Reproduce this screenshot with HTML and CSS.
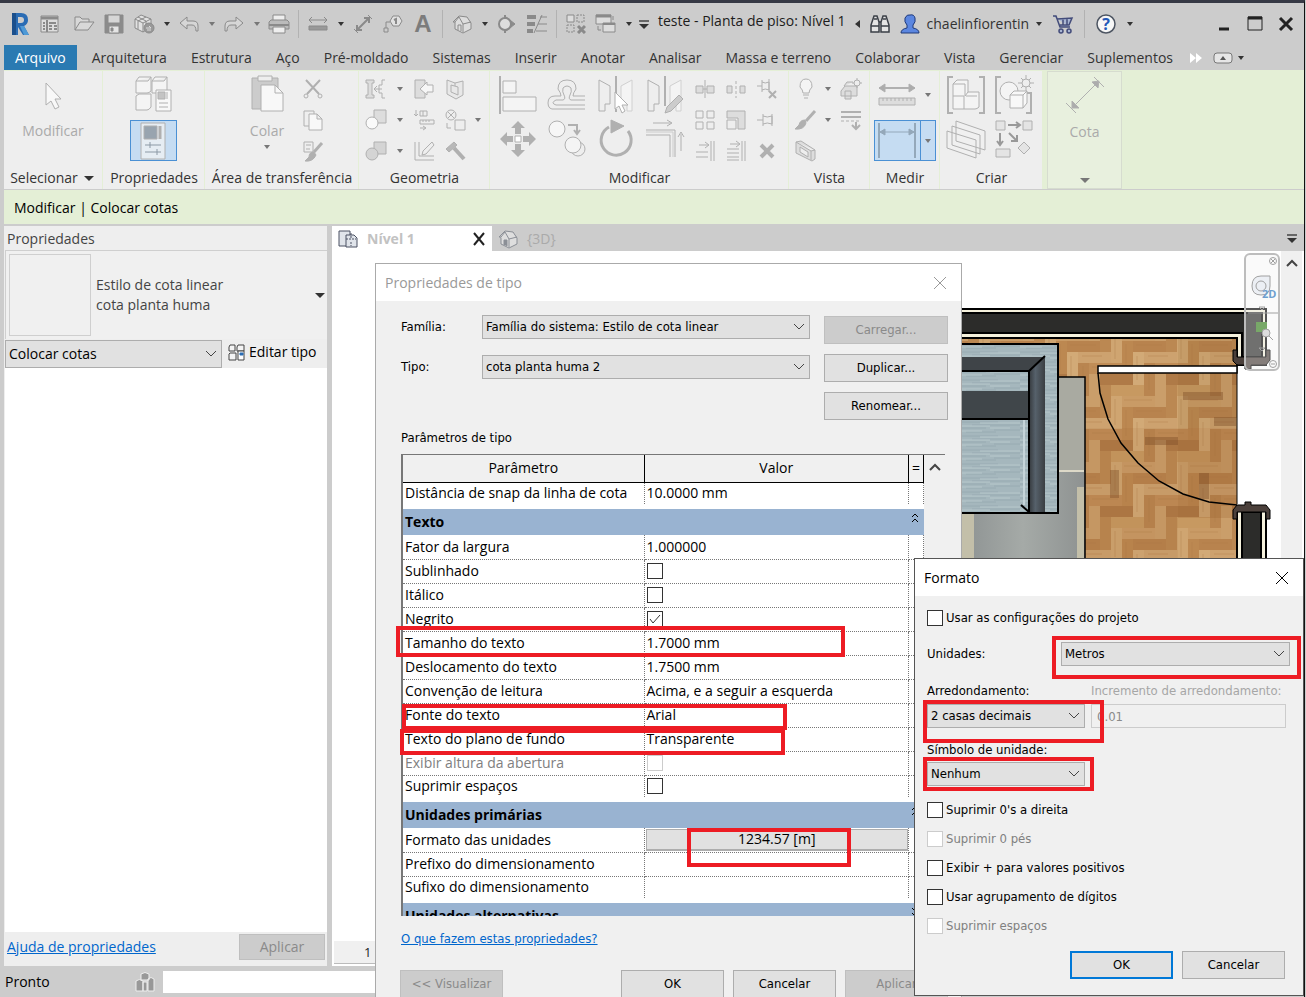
FILE: index.html
```html
<!DOCTYPE html>
<html lang="pt-BR">
<head>
  <meta charset="UTF-8">
  <meta name="viewport" content="width=device-width, initial-scale=1.0">
  <title>teste - Planta de piso: Nível 1</title>
  <link rel="stylesheet" href="styles.css">
</head>
<body>
  <div class="app">
    <!-- quick access toolbar -->
    <header class="quick">
      <button class="qb" aria-label="Revit"><svg width="20" height="24" viewBox="0 0 20 24"><path d="M2 1h9q7 0 7 7 0 4-4 6l5 9h-6l-5-8v8H2z" fill="#2a6cb4"/><path d="M2 1h4v22H2z" fill="#1b4f8c"/><path d="M8 5h3q3 0 3 3t-3 3H8z" fill="#cccccc"/><path d="M10 14l4 0 5 9h-5z" fill="#4f9ad6"/></svg></button>
      <button class="qb" aria-label="Página inicial"><svg class="tool" width="20" height="20" viewBox="0 0 20 20"><path d="M1 2h17v16H1z" fill="#ddd"/><path d="M1 4h17" stroke-width="3"/><path d="M7 6v12M3 9h2M3 12h2M3 15h2M9 9h7M9 12h3M9 15h3M14 12h3M14 15h3" stroke-width="2"/></svg></button>
      <button class="qb wide" aria-label="Abrir"><svg class="tool" width="22" height="20" viewBox="0 0 22 20"><path d="M2 16V3h5l2 2h7v3M2 16l5-8h14l-6 8z" fill="#d8d8d8"/></svg></button>
      <button class="qb" aria-label="Salvar"><svg class="tool" width="20" height="20" viewBox="0 0 20 20"><path d="M1 1h18v18H1z" fill="#8b8b8b"/><path d="M4 1h12v8H4z" fill="#d6d6d6"/><path d="M5 12h10v7H5z" fill="#e4e4e4"/><path d="M7 14h2v3H7z" fill="#888"/></svg></button>
      <button class="qb" aria-label="Sincronizar"><svg class="tool" width="22" height="22" viewBox="0 0 22 22"><path d="M2 6l6-4 5 2 5 2v8l-8 5-8-4z" fill="#e2e2e2"/><path d="M2 6l8 4 8-4M10 10v9M5 4l8 4v9M13 4L5 8v8"/><circle cx="16" cy="15" r="5" fill="#999"/><path d="M13 15h5l-2-2M18 17h-4" stroke="#ddd"/></svg></button>
      <span class="caret"></span>
      <button class="qb" aria-label="Desfazer"><svg class="tool" width="22" height="20" viewBox="0 0 22 20"><path d="M9 3L2 9l7 6v-4h5q4 0 4 6h2V12q0-5-5-5H9z" fill="#d6d6d6"/></svg></button>
      <span class="caret soft"></span>
      <button class="qb" aria-label="Refazer"><svg class="tool" width="22" height="20" viewBox="0 0 22 20"><path d="M13 3l7 6-7 6v-4H8q-4 0-4 6H2V12q0-5 5-5h6z" fill="#d6d6d6"/></svg></button>
      <span class="caret soft"></span>
      <button class="qb" aria-label="Imprimir"><svg class="tool" width="22" height="20" viewBox="0 0 22 20"><path d="M5 7V1h12v6" fill="#eee"/><path d="M1 8l2-2h16l2 2v7H1z" fill="#bbb"/><path d="M1 11h20" stroke-width="2"/><path d="M5 13h12v6H5z" fill="#eee"/></svg></button>
      <span class="sep"></span>
      <button class="qb" aria-label="Medir"><svg class="tool" width="20" height="16" viewBox="0 0 20 16"><path d="M1 4h18M4 1L1 4l3 3M16 1l3 3-3 3"/><path d="M1 10h18v4H1z" fill="#999"/></svg></button>
      <span class="caret"></span>
      <button class="qb" aria-label="Cota"><svg class="tool" width="20" height="20" viewBox="0 0 20 20"><path d="M4 16L16 4M11 4h5v5M4 11v5h5" stroke-width="2"/><path d="M15 1l4 4M1 15l4 4"/></svg></button>
      <button class="qb" aria-label="Identificador"><svg class="tool" width="20" height="20" viewBox="0 0 20 20"><path d="M10 2h6l3 5-3 5h-6L7 7z" fill="#e2e2e2"/><path d="M7 8H3v6M1 14h4v4H1z"/><path d="M11 6l2-1v5" stroke-width="2"/></svg></button>
      <button class="qb letter" aria-label="Texto">A</button>
      <span class="sep"></span>
      <button class="qb" aria-label="Vista 3D"><svg class="tool" width="20" height="20" viewBox="0 0 20 20"><path d="M1 8l6-6 8 1 4 6v6l-8 4-8-4V8z" fill="#ddd"/><path d="M3 8l4-5 4 7v8M11 10l8-2M6 16v-5h3v6" /></svg></button>
      <span class="caret"></span>
      <button class="qb" aria-label="Corte"><svg class="tool" width="20" height="20" viewBox="0 0 20 20"><path d="M9 3l9 7-9 7z" fill="#8b8b8b"/><circle cx="8" cy="10" r="6" fill="#ddd" stroke-width="2"/><path d="M8 1v3M8 16v3" stroke-width="2"/></svg></button>
      <button class="qb" aria-label="Linhas finas"><svg class="tool" width="22" height="20" viewBox="0 0 22 20"><path d="M1 3h9M1 10h8M1 17h6" stroke-width="4"/><path d="M8 19L16 1M14 3h7M12 10h9M10 17h11"/></svg></button>
      <span class="sep"></span>
      <button class="qb" aria-label="Fechar janelas ocultas"><svg class="tool" width="20" height="20" viewBox="0 0 20 20"><path d="M1 1h7v7H1z" fill="#ddd"/><path d="M11 1h7v7h-7zM1 11h7v7H1z" stroke-dasharray="2 1"/><path d="M12 12l7 7M19 12l-7 7" stroke-width="3"/></svg></button>
      <button class="qb" aria-label="Alternar janelas"><svg class="tool" width="22" height="20" viewBox="0 0 22 20"><path d="M1 1h15v9H1z" fill="#ddd"/><path d="M1 2h15" stroke-width="3"/><path d="M8 9h12v9H8z" fill="#ddd"/><path d="M8 10h12" stroke-width="2"/><path d="M18 2v4M3 12v4h3"/></svg></button>
      <span class="caret"></span>
      <span class="caret lined"></span>
      <h1 class="title">teste - Planta de piso: Nível 1</h1>
      <span class="caret side"></span>
      <button class="qb" aria-label="Pesquisar"><svg width="20" height="20" viewBox="0 0 20 20" fill="#e4e4e4" stroke="#3a3f47" stroke-width="1.500"><path d="M1 18v-7l3-9h3l2 6v10zM11 18V8l2-6h3l3 9v7z"/><path d="M1 12h8M11 12h8M9 8h2M4 5h3M13 5h3"/></svg></button>
      <button class="qb" aria-label="Conta"><svg width="20" height="20" viewBox="0 0 20 20" fill="#5b86e0" stroke="#203a78"><path d="M1 19q0-4 6-5V11Q4 8 5 4q2-4 5-3 4-1 5 3 1 4-2 7v3q6 1 6 5z"/></svg></button>
      <span class="user">chaelinfiorentin</span>
      <span class="caret"></span>
      <button class="qb cart" aria-label="Loja"><svg width="22" height="20" viewBox="0 0 22 20" fill="#a9b6d3" stroke="#434c7a" stroke-width="1.500"><path d="M1 2h3l4 11h10M5 5l15-1-3 7H8M11 5v6M15 5v6"/><circle cx="9" cy="17" r="2"/><circle cx="17" cy="17" r="2"/></svg></button>
      <span class="sep"></span>
      <button class="qb help" aria-label="Ajuda"><svg width="22" height="22" viewBox="0 0 22 22"><circle cx="11" cy="11" r="9" fill="#f7f7f7" stroke="#4d5562" stroke-width="1.500"/><text x="11" y="17" text-anchor="middle" class="help-mark">?</text></svg></button>
      <span class="caret"></span>
      <div class="window-buttons">
        <button aria-label="Minimizar"><svg width="16" height="16" viewBox="0 0 16 16"><path d="M3 13h10" stroke="#222" stroke-width="3"/></svg></button>
        <button aria-label="Maximizar"><svg width="16" height="16" viewBox="0 0 16 16"><path d="M1 1h14v13H1z" fill="none" stroke="#222"/><path d="M1 2h14" stroke="#222" stroke-width="3"/></svg></button>
        <button aria-label="Fechar"><svg width="16" height="16" viewBox="0 0 16 16"><path d="M2 2l12 12M14 2L2 14" stroke="#222" stroke-width="3"/></svg></button>
      </div>
    </header>

    <nav class="tabs">
      <a class="file" href="#">Arquivo</a>
      <a href="#">Arquitetura</a>
      <a href="#">Estrutura</a>
      <a href="#">Aço</a>
      <a href="#">Pré-moldado</a>
      <a href="#">Sistemas</a>
      <a href="#">Inserir</a>
      <a href="#">Anotar</a>
      <a href="#">Analisar</a>
      <a href="#">Massa e terreno</a>
      <a href="#">Colaborar</a>
      <a href="#">Vista</a>
      <a href="#">Gerenciar</a>
      <a href="#">Suplementos</a>
      <svg class="more" width="14" height="12" viewBox="0 0 14 12"><path d="M1 1l6 5-6 5zM7 1l6 5-6 5z" fill="#fff"/></svg>
      <button class="collapse" aria-label="Minimizar faixa"><svg width="20" height="12" viewBox="0 0 20 12"><rect x="1" y="1" width="18" height="10" rx="3" fill="#e6e6e6" stroke="#777"/><path d="M7 8h6l-3-4z" fill="#555"/></svg></button>
      <span class="caret"></span>
    </nav>

    <!-- ribbon -->
    <section class="ribbon">
      <div class="group g-select">
        <div class="group-body stack">
          <svg class="ico" width="44" height="44" viewBox="0 0 44 44"><path d="M15 10v22l5-4 4 8 4-2-4-8h6z" fill="#f8f8f8"/></svg>
          <span class="faded">Modificar</span>
        </div>
        <div class="group-name">Selecionar <span class="caret large"></span></div>
      </div>
      <div class="group g-props">
        <div class="group-body stack">
          <svg class="ico" width="44" height="44" viewBox="0 0 44 44"><path d="M4 8l3-4h12v14q-2 2-4 2H4zM20 8l3-4h12v14q-2 2-4 2H20zM4 23l3-2h12v13q-2 3-4 3H4zM4 8h12l3-4M20 8h12l3-4" fill="#f4f4f4"/><path d="M24 17h15v21H24z" fill="#f8f8f8"/><path d="M26 19h7v7h-7z" fill="#c4c4c4"/><path d="M35 19v7M27 30h9M27 34h9"/></svg>
          <button class="pressed" aria-label="Propriedades"><svg class="ico" width="44" height="38" viewBox="0 0 44 38"><path d="M9 1h24v36H9z" fill="#e6edf3"/><path d="M12 4h13v13H12z" fill="#98a4af"/><path d="M28 4v13" stroke-width="3"/><path d="M13 23h16M13 30h16M18 20v6M25 27v6" stroke="#8c99a5"/></svg></button>
        </div>
        <div class="group-name">Propriedades</div>
      </div>
      <div class="group g-clip">
        <div class="group-body clip">
          <div class="stack">
            <svg class="ico" width="44" height="44" viewBox="0 0 44 44"><path d="M7 5h26v31H7z" fill="#ccc"/><path d="M13 3h14v5H13z" fill="#eee"/><path d="M16 12h14l8 8v18H16z" fill="#f8f8f8"/><path d="M30 12v8h8"/></svg>
            <span class="faded">Colar</span>
            <span class="caret soft"></span>
          </div>
          <div class="small-col">
            <svg class="ico" width="24" height="24" viewBox="0 0 24 24"><path d="M5 3l13 14M19 3L6 17" stroke-width="2"/><circle cx="5" cy="19" r="2"/><circle cx="19" cy="19" r="2"/></svg>
            <svg class="ico" width="24" height="24" viewBox="0 0 24 24"><path d="M3 3h10v15H3z"/><path d="M8 6h8l5 5v11H8zM16 6v5h5" fill="#f8f8f8"/></svg>
            <svg class="ico" width="24" height="24" viewBox="0 0 24 24"><path d="M3 3h9v10H3zM5 6h5M5 10h4"/><path d="M21 4l-8 9" stroke-width="3"/><path d="M13 13q-5 0-5 5l-4 4q8 1 11-6z" fill="#b0b0b0"/></svg>
          </div>
        </div>
        <div class="group-name">Área de transferência</div>
      </div>
      <div class="group g-geo">
        <div class="group-body small-grid geo">
          <svg class="ico" width="24" height="24" viewBox="0 0 24 24"><path d="M2 3h8v3H8v12h2v3H2v-3h2V6H2z" fill="#ddd"/><path d="M21 3h-3v5h-3v8h3v5h3M18 12h-7M13 9l-3 3 3 3"/></svg><span class="caret soft"></span>
          <svg class="ico" width="24" height="24" viewBox="0 0 24 24"><path d="M3 3h10v18H3z" fill="#ddd"/><path d="M21 8h-6V5l-7 7 7 6v-3h6z" fill="#f6f6f6"/></svg>
          <svg class="ico" width="24" height="24" viewBox="0 0 24 24"><path d="M4 3l8 3 8-2v14l-7 4-9-5zM8 8l7 2v8l-7-3z" fill="#e8e8e8"/><path d="M12 6v3"/></svg><span></span>
          <svg class="ico" width="24" height="24" viewBox="0 0 24 24"><path d="M10 2h12v13H10z" fill="#ddd"/><circle cx="8" cy="15" r="6" fill="#fafafa"/></svg><span class="caret soft"></span>
          <svg class="ico" width="24" height="24" viewBox="0 0 24 24"><path d="M4 2v6M2 6l2 2 2-2M8 3h7v5H8zM11 3v5M8 12h14v4H8zM11 12v2M14 12v2M17 12v2M8 20h5M11 18l3 2-3 2"/></svg>
          <svg class="ico" width="24" height="24" viewBox="0 0 24 24"><circle cx="8" cy="7" r="5"/><path d="M5 4l6 6M11 4l-6 6M4 15v5h4M12 12h10v10H12z" fill="#eee"/></svg><span class="caret soft"></span>
          <svg class="ico" width="24" height="24" viewBox="0 0 24 24"><path d="M10 3h12v12H10z" fill="#d4d4d4"/><circle cx="8" cy="15" r="6" fill="#d4d4d4"/></svg><span class="caret soft"></span>
          <svg class="ico" width="24" height="24" viewBox="0 0 24 24"><path d="M3 3v18h19M7 3v14h15M20 3l-9 9-1 4 4-1 8-9z" fill="none"/></svg>
          <svg class="ico" width="24" height="24" viewBox="0 0 24 24"><path d="M3 10l8-7 3 3-8 7z" fill="#b8b8b8"/><path d="M11 9l10 11" stroke-width="4"/></svg><span></span>
        </div>
        <div class="group-name">Geometria</div>
      </div>
      <div class="group g-modify">
        <div class="group-body modify">
          <div class="large-grid four">
            <svg class="ico" width="44" height="44" viewBox="0 0 44 44"><path d="M4 3v38" stroke-width="2"/><path d="M7 8h13v12H7zM7 24h33v14H7z" fill="#f4f4f4"/></svg>
            <svg class="ico" width="44" height="44" viewBox="0 0 44 44"><path d="M40 23H28q0-3 3-7 0-9-9-9t-9 9q3 4 3 7h-6q-7 0-7 7t7 6h30M40 27H26q-3-1-1-5 2-3 1-7-4-4-8 0-1 4 1 7 2 4-1 5h-7q-6 3 0 5h29" /></svg>
            <svg class="ico" width="44" height="44" viewBox="0 0 44 44"><path d="M5 7l11 6v18h-5v7H5z" fill="#eee"/><path d="M38 7l-11 6v18h6v7h5z" fill="#f4f4f4" stroke="#d0d0d0"/><path d="M22 3v30M22 36v3" stroke-width="2"/><path d="M21 19v17l4-3 3 7 3-2-3-6h6z" fill="#fff"/></svg>
            <svg class="ico" width="44" height="44" viewBox="0 0 44 44"><path d="M5 7l11 6v18h-5v7H5z" fill="#eee"/><path d="M38 7l-11 6v18h6v7h5z" fill="#f4f4f4" stroke="#d0d0d0"/><path d="M22 3v30" stroke-width="2"/><path d="M36 22l4 4-12 12-6 2 2-6z" fill="#ccc"/></svg>
            <svg class="ico" width="44" height="44" viewBox="0 0 44 44"><path d="M22 4l7 7h-4v6h-6v-6h-4zM22 40l7-7h-4v-6h-6v6h-4zM4 22l7-7v4h6v6h-6v4zM40 22l-7-7v4h-6v6h6v4z" fill="#b0b0b0" stroke="none"/><path d="M19 19h6v6h-6z" fill="#fff"/></svg>
            <svg class="ico" width="44" height="44" viewBox="0 0 44 44"><circle cx="12" cy="12" r="8" fill="#f6f6f6"/><circle cx="33" cy="32" r="7" fill="#eee"/><circle cx="28" cy="28" r="8" fill="#f4f4f4"/><path d="M23 8h9v8M29 13l3 4 3-4" stroke-width="2"/></svg>
            <svg class="ico" width="44" height="44" viewBox="0 0 44 44"><path d="M15 10A15 15 0 1 0 34 14" stroke-width="3"/><path d="M17 3l13 6-13 7z" fill="#b0b0b0"/></svg>
            <svg class="ico" width="44" height="44" viewBox="0 0 44 44"><path d="M3 13h29v27M3 18h24v22M10 6h18M24 3l5 3-5 3M38 34V17M35 20l3-5 3 5"/><path d="M3 15h27v25" stroke="#ccc"/></svg>
          </div>
          <div class="small-grid three">
            <svg class="ico" width="24" height="24" viewBox="0 0 24 24"><path d="M3 9h7v7H3zM14 9h7v7h-7z" fill="#ddd"/><path d="M12 3v18M10 12h4"/></svg>
            <svg class="ico" width="24" height="24" viewBox="0 0 24 24"><path d="M3 9h5v7H3zM16 9h5v7h-5z" fill="#ddd"/><path d="M12 4v17" stroke-dasharray="3 2"/></svg>
            <svg class="ico" width="24" height="24" viewBox="0 0 24 24"><path d="M2 9h5M7 3v12M7 5q3 2 7 0v8q-4-2-7 0M14 2v13" fill="#eee"/><path d="M14 14l7 7M21 14l-7 7" stroke-width="2"/></svg>
            <svg class="ico" width="24" height="24" viewBox="0 0 24 24"><path d="M3 3h7v7H3zM14 3h7v7h-7zM3 14h7v7H3zM14 14h7v7h-7z"/></svg>
            <svg class="ico" width="24" height="24" viewBox="0 0 24 24"><path d="M3 3h18v18h-7V10H3z" fill="#ddd"/><path d="M3 12h9v9H3z"/></svg>
            <svg class="ico" width="24" height="24" viewBox="0 0 24 24"><path d="M2 12h6M8 6v12M8 8q4 2 9 0v8q-5-2-9 0M17 6v12" fill="#eee"/></svg>
            <svg class="ico" width="24" height="24" viewBox="0 0 24 24"><path d="M6 6h9M12 3l4 3-4 3M3 13h12M3 18h12M18 2v20M21 2v20"/></svg>
            <svg class="ico" width="24" height="24" viewBox="0 0 24 24"><path d="M6 5h9M12 2l4 3-4 3M3 10h12M3 14h12M3 18h12M3 21h12M18 2v20M21 2v20"/></svg>
            <svg class="ico" width="24" height="24" viewBox="0 0 24 24"><path d="M6 6l12 12M18 6L6 18" stroke-width="4"/></svg>
          </div>
        </div>
        <div class="group-name">Modificar</div>
      </div>
      <div class="group g-view">
        <div class="group-body small-grid view">
          <svg class="ico" width="24" height="24" viewBox="0 0 24 24"><path d="M9 16q0-3-3-6 0-8 6-8t6 8q-3 3-3 6zM9 18h6M10 21h4" fill="#f4f4f4"/></svg><span class="caret soft"></span>
          <svg class="ico" width="24" height="24" viewBox="0 0 24 24"><path d="M2 14l4-5h12v10H2zM6 14h6v8H6zM5 9l3-4h6" fill="#ddd"/><circle cx="18" cy="6" r="3"/><path d="M18 1v2M18 9v2M13 6h2M21 6h2"/></svg>
          <svg class="ico" width="24" height="24" viewBox="0 0 24 24"><path d="M21 3l-9 10" stroke-width="3"/><path d="M11 12q-5 0-6 5l-4 4q9 1 11-6z" fill="#b0b0b0"/></svg><span class="caret soft"></span>
          <svg class="ico" width="24" height="24" viewBox="0 0 24 24"><path d="M2 4h20M2 9h20" stroke-width="2"/><path d="M2 13h20" stroke-dasharray="3 2"/><path d="M17 14v7M13 17l4 4 4-4" stroke-width="2"/></svg>
          <svg class="ico" width="24" height="24" viewBox="0 0 24 24"><path d="M2 3l5-1 14 9v9l-3 2L2 14zM2 3l15 9 4-1M17 12v9M6 8v5l8 5v-5z" fill="#ddd"/></svg>
        </div>
        <div class="group-name">Vista</div>
      </div>
      <div class="group g-measure">
        <div class="group-body stack">
          <div class="split">
            <svg class="ico" width="46" height="44" viewBox="0 0 46 44"><path d="M5 15h36" stroke-width="2"/><path d="M11 11l-6 4 6 4zM35 11l6 4-6 4z" fill="#acacac"/><path d="M5 25h36v7H5z" fill="#ddd"/><path d="M9 25v3M13 25v3M17 25v3M21 25v3M25 25v3M29 25v3M33 25v3M37 25v3"/></svg><span class="caret soft"></span>
          </div>
          <div class="split">
            <button class="pressed" aria-label="Cota alinhada"><svg class="blue-ico" width="44" height="38" viewBox="0 0 44 38"><path d="M4 1v35M40 1v35" stroke-width="2"/><path d="M5 10h34"/><path d="M10 7l-5 3 5 3zM34 7l5 3-5 3z" fill="#94a8ba"/></svg></button>
            <button class="pressed thin" aria-label="Mais cotas"><span class="caret soft"></span></button>
          </div>
        </div>
        <div class="group-name">Medir</div>
      </div>
      <div class="group g-create">
        <div class="group-body large-grid two">
          <svg class="ico" width="44" height="44" viewBox="0 0 44 44"><path d="M9 4H4v36h5M35 4h5v36h-5" stroke-width="2"/><path d="M9 23V11l4-4h11v12h11v15q-2 2-4 2H9zM9 23h11v13M22 23h11M24 19l-3 4M9 11h12v12" fill="#f4f4f4"/></svg>
          <svg class="ico" width="44" height="44" viewBox="0 0 44 44"><path d="M9 4H4v36h5M35 20h4v20h-5" stroke-width="2"/><circle cx="17" cy="18" r="9" fill="#f4f4f4"/><path d="M18 22l4-4h13v12l-4 5H18zM18 22h13v13M31 22l4-4" fill="#f8f8f8"/><circle cx="34" cy="10" r="4"/><path d="M34 2v4M34 14v4M26 10h4M38 10h4M29 5l2 2M39 5l-2 2M29 15l2-2M39 15l-2-2"/></svg>
          <svg class="ico" width="44" height="44" viewBox="0 0 44 44"><path d="M12 4l29 10v19l-29-9zM8 9l28 9v19L8 28zM3 14l29 9v18L3 31z" fill="#f0f0f0"/></svg>
          <svg class="ico" width="44" height="44" viewBox="0 0 44 44"><path d="M4 4h9v9H4zM31 4h9v9h-9zM4 32h14v8H4zM32 25l6 6-6 6-6-6z" fill="#e4e4e4"/><path d="M16 8h11M24 5l4 3-4 3M8 16v11M5 24l3 4 3-4M17 16l8 8M25 18v6h-6" stroke="#999" stroke-width="2"/></svg>
        </div>
        <div class="group-name">Criar</div>
      </div>
      <div class="context">
        <svg class="ico" width="44" height="44" viewBox="0 0 44 44"><path d="M9 34L36 7"/><path d="M29 8l7-1-1 7zM9 27v7h7z" fill="#acacac"/><path d="M31 3l10 10M3 29l10 10"/></svg>
        <span class="faded">Cota</span>
        <span class="caret large soft"></span>
      </div>
    </section>
    <div class="options">Modificar | Colocar cotas</div>

    <div class="workspace">
      <!-- properties palette -->
      <aside class="palette">
        <h2>Propriedades</h2>
        <div class="type">
          <div class="thumb"></div>
          <p>Estilo de cota linear<br>cota planta huma</p>
          <span class="caret large"></span>
        </div>
        <div class="filter">
          <select aria-label="Filtro"><option>Colocar cotas</option></select>
          <button class="edit"><svg width="17" height="17" viewBox="0 0 17 17" fill="#f4f4f4" stroke="#444"><path d="M1 3l1-2h5v6H1zM9 3l1-2h6v6H9zM1 10l1-1h6v7H1z"/><path d="M10 7h6v9h-6z" fill="#fff"/><path d="M12 9h3v2h-3z" fill="#2a6cb4" stroke="#2a6cb4"/></svg>Editar tipo</button>
        </div>
        <div class="list"></div>
        <div class="palette-foot">
          <a href="#">Ajuda de propriedades</a>
          <button disabled>Aplicar</button>
        </div>
      </aside>

      <main class="views">
        <div class="view-tabs">
          <div class="view-tab active">
            <svg width="20" height="20" viewBox="0 0 20 20" fill="#e0e4ea" stroke="#4a5162"><path d="M1 2h11v15H1z"/><path d="M8 6h8l3 3v9H8z"/><path d="M8 10h10M13 4v6M13 13v4" stroke-dasharray="2 1"/></svg>
            <b>Nível 1</b>
            <button aria-label="Fechar vista"><svg width="14" height="14" viewBox="0 0 14 14"><path d="M2 1l10 12M12 1L2 13" stroke="#222" stroke-width="2"/></svg></button>
          </div>
          <div class="view-tab">
            <svg width="20" height="20" viewBox="0 0 20 20" fill="#dedede" stroke="#8b8f96"><path d="M1 8l6-6 8 1 4 6v6l-8 4-8-4V8z"/><path d="M3 8l4-5 4 7v8M11 10l8-2"/><path d="M6 16v-5h3v6" fill="#8b8f96"/></svg>
            <span>{3D}</span>
          </div>
          <span class="caret lined"></span>
        </div>
        <div class="canvas">
          <svg class="plan" width="323" height="308" viewBox="961 251 323 308">
            <defs>
              <pattern id="wood" width="66" height="66" patternUnits="userSpaceOnUse">
                <rect width="66" height="66" fill="#c1905b"/>
                <path d="M0 0h33v11H0z" fill="#c99b66"/><path d="M11 11h33v11H11z" fill="#b8834e"/><path d="M22 22h33v11H22z" fill="#cda26f"/><path d="M33 33h33v11H33z" fill="#c08d57"/>
                <path d="M44 44h22v11H44zM0 44h11v11H0z" fill="#af7a47"/><path d="M55 55h11v11H55zM0 55h22v11H0z" fill="#c79961"/>
                <path d="M0 11h11v33H0z" fill="#bc8851"/><path d="M11 22h11v33H11z" fill="#d2aa77"/><path d="M22 33h11v33H22z" fill="#b98550"/>
                <path d="M33 44h11v22H33zM33 0h11v11H33z" fill="#ca9e6a"/><path d="M44 55h11v11H44zM44 0h11v22H44z" fill="#bb8852"/><path d="M55 0h11v33H55z" fill="#cfa571"/>
                <path d="M2 4h28M14 15h26M26 26h20M36 37h26M4 14v26M15 26v24M27 36v24M59 3v26" fill="none" stroke="#a87542" opacity=".35"/>
              </pattern>
              <pattern id="weave" width="60" height="14" patternUnits="userSpaceOnUse">
                <rect width="60" height="14" fill="#a5b7bd"/>
                <path d="M0 2h38M12 5h48M0 8h26M34 10h26M6 12h30" stroke="#8ea2aa" opacity=".6"/>
                <path d="M20 3h40M0 6h30M30 8h20M0 11h22" stroke="#bccbd0" opacity=".8"/>
              </pattern>
              <linearGradient id="arm"><stop offset="0" stop-color="#35393d"/><stop offset=".4" stop-color="#56616b"/><stop offset="1" stop-color="#3a3e42"/></linearGradient>
              <linearGradient id="rug"><stop offset="0" stop-color="#8d9292"/><stop offset=".5" stop-color="#a5aaa7"/><stop offset="1" stop-color="#8e9291"/></linearGradient>
            </defs>
            <path d="M961 339h276v220H961z" fill="url(#wood)"/>
            <path d="M1085 428h93v131h-93z" fill="#8a4d1c" opacity=".08"/><path d="M1178 339h59v89h-59z" fill="#7a4a22" opacity=".1"/><path d="M1178 428h59v90h-59z" fill="#8a4d1c" opacity=".18"/>
            <path d="M1145 437h33v8h-33zM1183 392h40v8h-40zM1214 417h22v9h-22zM1199 473h10v26h-10zM1110 470h9v28h-9z" fill="#7a4a25" opacity=".4"/>
            <path d="M961 377h124v182H961z" fill="url(#rug)"/><path d="M1058 377h27v93h-27z" fill="#a9aaa1"/><path d="M961 514h13v45h-13zM1077 487h7v72h-7z" fill="#c3bfa9"/><path d="M1059 471h25" stroke="#ddd9c8" stroke-width="2"/>
            <path d="M1058 377h27v182" fill="none" stroke="#000" stroke-width="1.500"/>
            <path d="M955 344h103v169H955z" fill="url(#weave)" stroke="#000" stroke-width="2"/>
            <path d="M961 357h84l-16 14h-68z" fill="#3f4448"/><path d="M1029 371l16-14v155h-16z" fill="url(#arm)"/><path d="M961 391h67v27h-67z" fill="#40464a"/>
            <path d="M961 371h68v141M1029 371l16-15M961 419h68M1021 505l8 7" fill="none" stroke="#000" stroke-width="2"/>
            <path d="M1024 420v85" stroke="#c5d4d9" stroke-width="2"/>
            <!-- walls -->
            <path d="M955 309h311v56h-29v-27H955z" fill="#f5f1dc" stroke="#000" stroke-width="2"/>
            <path d="M955 313h307v44h-20v-24H955z" fill="#2c2c2a" stroke="#000" stroke-width="2"/>
            <path d="M1233 350h4v7h29v-7h4v10l-4 5h-15v4h-6v-4h-8l-4-4z" fill="#4b403b" stroke="#000"/>
            <path d="M1237 508h29v55h-29z" fill="#f5f1dc" stroke="#000" stroke-width="2"/><path d="M1242 512h19v51h-19z" fill="#2c2c2a" stroke="#000" stroke-width="2"/>
            <path d="M1237 505h8v-3h6v3h15l4 5v9h-4v-7h-29v7h-4v-9z" fill="#4b403b" stroke="#000"/>
            <!-- door -->
            <path d="M1237 364v140" stroke="#000"/><path d="M1098 366h139v7h-139z" fill="#fff" stroke="#000" stroke-width="1.500"/>
            <path d="M1098 373l2 20 8 26 13 24 17 20 21 18 24 13 26 8 28 3" fill="none" stroke="#000" stroke-width="1.500"/>
          </svg>
          <div class="navbar">
            <svg width="34" height="116" viewBox="0 0 34 116" fill="none" stroke="#a0a0a0"><circle cx="27" cy="6" r="3.500"/><path d="M25 4l4 4M29 4l-4 4"/><path d="M15 21h9v10q0 9-9 9t-9-9q0-10 9-10z" fill="#eceff4"/><circle cx="15" cy="31" r="5"/><text x="16" y="43" class="nav-label">2D</text><path d="M13 52h6l-3 3zM2 58h30M13 93h6l-3 3z"/><path d="M10 67h11v10H10z" fill="#78a868" stroke="none"/><circle cx="20" cy="78" r="4" fill="#ddd"/><path d="M23 81l4 4"/><circle cx="27" cy="109" r="3.500"/><path d="M25 109h4"/></svg>
          </div>
          <div class="scroll"><svg width="12" height="8" viewBox="0 0 12 8"><path d="M1 7l5-5 5 5" fill="none" stroke="#444" stroke-width="2"/></svg></div>
        </div>
        <div class="scale">1</div>
      </main>
    </div>

    <footer class="status">
      <span>Pronto</span>
      <svg width="20" height="20" viewBox="0 0 20 20" fill="#989898" stroke="#eee"><path d="M6 2q4-3 8 0v6H6zM1 9q3-3 7 0v10H1zM13 7q3-3 6 0v12h-6zM8 10h4v9H8z"/></svg>
      <input type="text" aria-label="Mensagem">
    </footer>
  </div>

  <!-- type properties -->
  <section class="dialog type-dialog">
    <header><span>Propriedades de tipo</span><button aria-label="Fechar"><svg width="14" height="14" viewBox="0 0 14 14"><path d="M1 1l12 12M13 1L1 13" stroke="currentColor"/></svg></button></header>
    <form class="type-form">
      <div class="fields">
        <label for="family">Família:</label>
        <select id="family"><option>Família do sistema: Estilo de cota linear</option></select>
        <label for="kind">Tipo:</label>
        <select id="kind"><option>cota planta huma 2</option></select>
      </div>
      <div class="type-buttons">
        <button type="button" disabled>Carregar...</button>
        <button type="button">Duplicar...</button>
        <button type="button">Renomear...</button>
      </div>
    </form>
    <p class="caption">Parâmetros de tipo</p>
    <div class="params">
      <table>
        <thead><tr><th class="c-name">Parâmetro</th><th>Valor</th><th class="c-eq">=</th></tr></thead>
        <tbody>
          <tr><td>Distância de snap da linha de cota</td><td>10.0000 mm</td><td></td></tr>
          <tr class="section"><td colspan="2">Texto</td><td><svg width="8" height="10" viewBox="0 0 8 10"><path d="M1 4l3-3 3 3M1 9l3-3 3 3" fill="none" stroke="#000"/></svg></td></tr>
          <tr><td>Fator da largura</td><td>1.000000</td><td></td></tr>
          <tr><td>Sublinhado</td><td><input type="checkbox" aria-label="Sublinhado"></td><td></td></tr>
          <tr><td>Itálico</td><td><input type="checkbox" aria-label="Itálico"></td><td></td></tr>
          <tr><td>Negrito</td><td><input type="checkbox" aria-label="Negrito" checked></td><td></td></tr>
          <tr><td>Tamanho do texto</td><td>1.7000 mm</td><td></td></tr>
          <tr><td>Deslocamento do texto</td><td>1.7500 mm</td><td></td></tr>
          <tr><td>Convenção de leitura</td><td>Acima, e a seguir a esquerda</td><td></td></tr>
          <tr><td>Fonte do texto</td><td>Arial</td><td></td></tr>
          <tr><td>Texto do plano de fundo</td><td>Transparente</td><td></td></tr>
          <tr class="off"><td>Exibir altura da abertura</td><td><input type="checkbox" aria-label="Exibir altura da abertura" disabled></td><td></td></tr>
          <tr><td>Suprimir espaços</td><td><input type="checkbox" aria-label="Suprimir espaços"></td><td></td></tr>
          <tr class="section"><td colspan="2">Unidades primárias</td><td><svg width="8" height="10" viewBox="0 0 8 10"><path d="M1 4l3-3 3 3M1 9l3-3 3 3" fill="none" stroke="#000"/></svg></td></tr>
          <tr><td>Formato das unidades</td><td class="cell-button"><button type="button">1234.57 [m]</button></td><td></td></tr>
          <tr><td>Prefixo do dimensionamento</td><td></td><td></td></tr>
          <tr><td>Sufixo do dimensionamento</td><td></td><td></td></tr>
          <tr class="section"><td colspan="2">Unidades alternativas</td><td><svg width="8" height="10" viewBox="0 0 8 10"><path d="M1 1l3 3 3-3M1 6l3 3 3-3" fill="none" stroke="#000"/></svg></td></tr>
        </tbody>
      </table>
      <div class="scroll"><svg width="12" height="8" viewBox="0 0 12 8"><path d="M1 7l5-5 5 5" fill="none" stroke="#444" stroke-width="2"/></svg></div>
    </div>
    <a class="what" href="#">O que fazem estas propriedades?</a>
    <div class="type-actions">
      <button type="button" class="preview" disabled>&lt;&lt; Visualizar</button>
      <button type="button">OK</button>
      <button type="button">Cancelar</button>
      <button type="button" disabled>Aplicar</button>
    </div>
    <div class="mark m-size"></div>
    <div class="mark m-font"></div>
    <div class="mark m-back"></div>
    <div class="mark m-unit"></div>
  </section>

  <!-- unit format -->
  <section class="dialog format-dialog">
    <header><span>Formato</span><button aria-label="Fechar"><svg width="14" height="14" viewBox="0 0 14 14"><path d="M1 1l12 12M13 1L1 13" stroke="currentColor"/></svg></button></header>
    <form class="format-form">
      <label class="check"><input type="checkbox">Usar as configurações do projeto</label>
      <div class="units"><label for="units">Unidades:</label><select id="units"><option>Metros</option></select></div>
      <div class="rounding">
        <label for="round">Arredondamento:</label>
        <label for="step" class="off">Incremento de arredondamento:</label>
        <select id="round"><option>2 casas decimais</option></select>
        <input id="step" type="text" value="0.01" disabled>
      </div>
      <div class="symbol">
        <label for="symbol">Símbolo de unidade:</label>
        <select id="symbol"><option>Nenhum</option></select>
      </div>
      <div class="checks">
        <label class="check"><input type="checkbox">Suprimir 0's a direita</label>
        <label class="check off"><input type="checkbox" disabled>Suprimir 0 pés</label>
        <label class="check"><input type="checkbox">Exibir + para valores positivos</label>
        <label class="check"><input type="checkbox">Usar agrupamento de dígitos</label>
        <label class="check off"><input type="checkbox" disabled>Suprimir espaços</label>
      </div>
      <div class="format-actions">
        <button type="button" class="default">OK</button>
        <button type="button">Cancelar</button>
      </div>
    </form>
    <div class="mark m-meters"></div>
    <div class="mark m-round"></div>
    <div class="mark m-symbol"></div>
  </section>
</body>
</html>
```
FILE: styles.css
```css
* {
  box-sizing: border-box;
}
body {
  margin: 0;
  height: 100vh;
  overflow: hidden;
  position: relative;
  font-family: "Open Sans", "Noto Sans", sans-serif;
  font-size: 14px;
  line-height: 20px;
  color: #1c1c1c;
  background: #cccccc;
}
h1, h2, p {
  margin: 0;
  font-size: 14px;
  font-weight: normal;
}
button, select, input {
  font: inherit;
  color: inherit;
  margin: 0;
}
button {
  padding: 0;
  border: 0;
  background: none;
}
a {
  color: #0066cc;
}
svg {
  display: block;
  flex: none;
}
.app {
  display: flex;
  flex-direction: column;
  height: 100%;
  margin-right: 1px;
  padding-left: 4px;
  border-top: 3px solid #363945;
  border-right: 1px solid #111;
}

/* carets */
.caret {
  flex: none;
  width: 15px;
  display: flex;
  justify-content: center;
}
.caret::before {
  content: "";
  border: 3px solid transparent;
  border-top: 4px solid #333;
  border-bottom: 0;
}
.caret.large::before {
  border-width: 5px 5px 0;
}
.caret.soft::before {
  border-top-color: #777;
}
.caret.side::before {
  border: 4px solid transparent;
  border-right: 5px solid #333;
  border-left: 0;
}
.caret.lined {
  flex-direction: column;
  align-items: center;
  gap: 2px;
}
.caret.lined::after {
  content: "";
  order: -1;
  width: 10px;
  height: 2px;
  background: #666;
}
.caret.lined::before {
  border-width: 5px 5px 0;
}

/* quick toolbar */
.quick {
  display: flex;
  align-items: center;
  height: 42px;
  padding-left: 1px;
}
.qb {
  flex: none;
  width: 30px;
  height: 30px;
  display: flex;
  align-items: center;
  justify-content: center;
}
.qb.wide {
  width: 34px;
  padding-left: 4px;
}
.letter {
  font: bold 24px/30px "Liberation Sans", Arial, sans-serif;
  color: #7c7c7c;
}
.tool {
  fill: none;
  stroke: #8a8a8a;
}
.sep {
  flex: none;
  width: 1px;
  height: 28px;
  margin: 0 4px;
  background: #b2b2b2;
}
.title {
  margin: 0 4px 0 7px;
  padding-bottom: 6px;
  white-space: nowrap;
}
.user {
  margin: 0 2px;
  color: #333;
}
.cart {
  margin: 0 2px;
}
.help {
  margin: 0 1px 0 2px;
}
.help-mark {
  font: bold 16px "Open Sans", sans-serif;
  fill: #2458b8;
}
.window-buttons {
  display: flex;
  gap: 15px;
  margin-left: auto;
  padding-right: 10px;
}

/* ribbon tabs */
.tabs {
  display: flex;
  align-items: center;
  height: 25px;
}
.tabs a {
  padding: 0 12px;
  line-height: 25px;
  color: #333;
  text-decoration: none;
  white-space: nowrap;
}
.tabs .file {
  margin-right: 3px;
  padding: 0 11px;
  color: #fff;
  background: #2a7ab2;
}
.more {
  margin-left: 4px;
}
.collapse {
  margin-left: 10px;
}

/* ribbon */
.ribbon {
  display: flex;
  height: 119px;
  background: #e4efd6;
  border-top: 1px solid #e4efd6;
}
.group {
  flex: none;
  display: flex;
  flex-direction: column;
  padding-top: 2px;
  background: #eeeeee;
  border-right: 1px solid #e4efd6;
}
.g-select { width: 99px; }
.g-props { width: 102px; }
.g-clip { width: 154px; }
.g-geo { width: 131px; }
.g-modify { width: 299px; }
.g-view { width: 81px; }
.g-measure { width: 70px; }
.g-create { width: 103px; }
.group-body {
  height: 94px;
}
.group-name {
  display: flex;
  align-items: center;
  justify-content: center;
  gap: 4px;
  height: 22px;
  padding-left: 1px;
  color: #333;
  white-space: nowrap;
}
.stack {
  display: flex;
  flex-direction: column;
  align-items: center;
}
.faded {
  height: 24px;
  line-height: 28px;
  color: #aaa;
}
.ico {
  fill: none;
  stroke: #b0b0b0;
}
.blue-ico {
  fill: none;
  stroke: #94a8ba;
}
.clip {
  display: flex;
  padding-left: 35px;
}
.clip .stack {
  width: 54px;
}
.clip .caret {
  margin-top: 4px;
}
.small-col,
.small-grid {
  display: grid;
  grid-auto-rows: 31px;
  align-items: center;
  justify-items: center;
  align-content: start;
}
.small-col {
  width: 38px;
}
.small-grid.geo {
  grid-template-columns: 33px 16px 31px 31px 16px;
}
.small-grid.three {
  grid-template-columns: repeat(3, 31px);
}
.small-grid.view {
  grid-template-columns: 33px 12px 33px;
}
.modify {
  display: flex;
  padding-left: 3px;
}
.large-grid {
  display: grid;
  grid-auto-rows: 44px;
  justify-items: center;
  align-content: start;
}
.large-grid.four {
  grid-template-columns: repeat(4, 49px);
}
.large-grid.two {
  grid-template-columns: repeat(2, 48px);
  padding-left: 2px;
}
.pressed {
  width: 47px;
  height: 41px;
  margin-top: 3px;
  display: flex;
  align-items: center;
  justify-content: center;
  background: #c5dcf2;
  border: 1px solid #4a90d4;
}
.pressed.thin {
  width: 16px;
  margin-left: -1px;
}
.split {
  display: flex;
  align-items: center;
}
.context {
  width: 75px;
  margin-left: 4px;
  padding-top: 2px;
  display: flex;
  flex-direction: column;
  align-items: center;
  background: #e8f0de;
  border: 1px solid #d6dccf;
}
.context .caret {
  margin-top: auto;
  padding-bottom: 5px;
}
.options {
  height: 35px;
  padding-left: 10px;
  line-height: 35px;
  background: #e4efd6;
  border-top: 1px solid #cccccc;
  color: #000;
}

/* workspace */
.workspace {
  flex: 1;
  min-height: 0;
  display: flex;
  gap: 5px;
  padding-top: 2px;
}
.palette {
  width: 323px;
  flex: none;
  display: flex;
  flex-direction: column;
  padding-left: 1px;
  background: #eeeeee;
}
.palette h2 {
  height: 24px;
  padding-left: 2px;
  line-height: 26px;
  color: #444;
}
.type {
  display: flex;
  align-items: center;
  height: 89px;
  padding: 0 0 0 3px;
  border: 1px solid #cfcfcf;
  border-right: 0;
  border-bottom: 0;
  color: #444;
  background: #f0f0f0;
}
.thumb {
  width: 82px;
  height: 82px;
  margin-right: 5px;
  border: 1px solid #cfcfcf;
}
.type .caret {
  margin-left: auto;
}
.filter {
  display: flex;
  align-items: center;
  height: 29px;
}
.filter select {
  width: 217px;
  height: 28px;
}
.edit {
  display: flex;
  align-items: center;
  gap: 4px;
  margin-left: 6px;
  padding-bottom: 3px;
  color: #000;
}
.list {
  flex: 1;
  background: #fff;
}
.palette-foot {
  display: flex;
  align-items: center;
  justify-content: space-between;
  height: 34px;
  padding: 2px 2px 6px;
}
.palette-foot button {
  width: 86px;
  height: 26px;
  color: #8a8a8a;
  background: #cccccc;
  border: 1px solid #bfbfbf;
}
.views {
  flex: 1;
  min-width: 0;
  display: flex;
  flex-direction: column;
  background: #fff;
}
.view-tabs {
  display: flex;
  align-items: center;
  height: 25px;
  background: #cccccc;
}
.view-tab {
  display: flex;
  align-items: center;
  gap: 9px;
  height: 25px;
  padding: 0 6px;
  color: #aaa;
}
.view-tab.active {
  width: 160px;
  color: #c2c2c2;
  background: #fff;
}
.view-tab button {
  margin-left: auto;
}
.view-tabs .lined {
  margin-left: auto;
  margin-right: 5px;
}
.canvas {
  flex: 1;
  min-height: 0;
  display: flex;
  justify-content: flex-end;
  position: relative;
}
.plan {
  margin-right: -3px;
}
.navbar {
  position: absolute;
  top: 2px;
  right: 24px;
  width: 36px;
  height: 118px;
  background: rgba(240, 240, 240, .35);
  border: 2px solid #bdbdbd;
  border-radius: 6px;
}
.nav-label {
  font: bold 11px "Open Sans", sans-serif;
  fill: #6d9fce;
  stroke: none;
}
.scroll {
  width: 21px;
  flex: none;
  padding: 8px 5px;
  background: #f0f0f0;
}
.canvas .scroll {
  margin-right: 2px;
}
.scale {
  width: 60px;
  height: 23px;
  margin: 0 0 2px 2px;
  padding-left: 30px;
  font-size: 13px;
  line-height: 23px;
  background: #f0f0f0;
  border-bottom: 1px solid #bbb;
}
.status {
  display: flex;
  align-items: center;
  height: 31px;
  padding: 1px 2px 0 1px;
  color: #000;
}
.status span {
  width: 130px;
}
.status input {
  flex: 1;
  height: 22px;
  margin-left: 8px;
  border: 0;
  background: #fff;
}

/* form controls */
select {
  height: 24px;
  padding: 0 24px 0 3px;
  appearance: none;
  color: #000;
  border: 1px solid #adadad;
  border-radius: 0;
  background: #e1e1e1 url("data:image/svg+xml,%3Csvg xmlns='http://www.w3.org/2000/svg' width='12' height='8'%3E%3Cpath d='M1 1l5 5 5-5' fill='none' stroke='%23444'/%3E%3C/svg%3E") no-repeat right 4px center;
}
input[type="checkbox"] {
  appearance: none;
  flex: none;
  display: block;
  width: 16px;
  height: 16px;
  border: 1px solid #333;
  background: #fff;
}
input[type="checkbox"]:checked {
  background: #fff url("data:image/svg+xml,%3Csvg xmlns='http://www.w3.org/2000/svg' width='14' height='14'%3E%3Cpath d='M2 7l3 4 7-8' fill='none' stroke='%23333'/%3E%3C/svg%3E");
}
input[type="checkbox"]:disabled {
  border-color: #ccc;
}

/* dialogs */
.dialog {
  position: absolute;
  display: flex;
  flex-direction: column;
  font-family: "DejaVu Sans Condensed", "Noto Sans", sans-serif;
  font-size: 13px;
  line-height: 16px;
  color: #000;
  background: #f0f0f0;
  border: 1px solid #aaa;
}
.dialog > header {
  display: flex;
  align-items: center;
  justify-content: space-between;
  height: 37px;
  flex: none;
  padding: 0 14px 0 9px;
  font-family: "Open Sans", "Noto Sans", sans-serif;
  font-size: 14px;
  background: #fff;
}
.dialog form button,
.type-actions button {
  height: 28px;
  background: #e1e1e1;
  border: 1px solid #adadad;
}
.dialog form button:disabled,
.type-actions button:disabled {
  color: #8a8a8a;
  background: #cccccc;
  border-color: #bfbfbf;
}
.type-dialog {
  left: 375px;
  top: 263px;
  width: 587px;
  height: 760px;
}
.type-dialog > header {
  color: #999;
}
.type-form {
  display: flex;
  gap: 14px;
  padding: 14px 0 0 25px;
}
.fields {
  display: grid;
  grid-template-columns: 81px 328px;
  align-content: start;
  align-items: center;
  row-gap: 16px;
}
.type-buttons {
  display: flex;
  flex-direction: column;
  gap: 10px;
  width: 124px;
  padding-top: 1px;
}
.caption {
  padding: 10px 0 0 25px;
  font-size: 13px;
}
.params {
  display: flex;
  flex: none;
  width: 544px;
  height: 462px;
  margin: 8px 0 0 25px;
  overflow: hidden;
  border: 1px solid #777;
  border-width: 1px 0 0 2px;
}
.params table {
  width: 521px;
  height: 100px;
  border-collapse: collapse;
  table-layout: fixed;
  font-family: "Open Sans", "Noto Sans", sans-serif;
  font-size: 14px;
  background: #fff;
}
.params th {
  height: 27px;
  padding: 0;
  font-weight: normal;
  background: #f0f0f0;
  border: 1px solid #000;
  border-width: 0 1px 1px 0;
}
.params .c-name {
  width: 241px;
}
.params .c-eq {
  width: 15px;
}
.params td {
  height: 24px;
  padding: 0 2px;
  white-space: nowrap;
  border: 1px dotted #777;
  border-width: 0 1px 1px 0;
}
.params .off td {
  color: #808080;
}
.params .section td {
  height: 29px;
  font-weight: bold;
  background: #99b3d1;
  border: 0;
  border-top: 5px solid #fff;
}
.section svg {
  margin-bottom: 8px;
}
.params .cell-button {
  padding: 0 0 0 1px;
}
.cell-button button {
  display: block;
  width: 100%;
  height: 22px;
  background: #e1e1e1;
  border: 1px solid #adadad;
  border-bottom-width: 2px;
}
.what {
  align-self: flex-start;
  margin: 15px 0 0 25px;
}
.type-actions {
  display: flex;
  gap: 9px;
  margin: 23px 0 0 24px;
}
.type-actions button {
  width: 103px;
}
.type-actions .preview {
  margin-right: 109px;
}
.format-dialog {
  left: 914px;
  top: 558px;
  width: 390px;
  height: 438px;
  border-color: #555;
}
.format-form {
  padding: 14px 13px 14px 12px;
}
.check {
  display: flex;
  align-items: center;
  gap: 3px;
  height: 16px;
}
.units {
  display: flex;
  align-items: center;
  justify-content: space-between;
  margin-top: 16px;
}
.units select {
  width: 229px;
}
.rounding {
  display: grid;
  grid-template-columns: 158px 195px;
  column-gap: 6px;
  row-gap: 5px;
  margin-top: 17px;
}
.off {
  color: #808080;
}
.rounding .off {
  color: #a6a6a6;
}
.rounding input {
  height: 24px;
  padding: 0 5px;
  color: #8a8a8a;
  background: #f0f0f0;
  border: 1px solid #ccc;
}
.symbol {
  display: flex;
  flex-direction: column;
  width: 158px;
  margin-top: 14px;
  gap: 4px;
}
.checks {
  display: grid;
  gap: 13px;
  margin-top: 16px;
}
.format-actions {
  display: flex;
  justify-content: flex-end;
  gap: 9px;
  padding-right: 5px;
  margin-top: 17px;
}
.format-actions button {
  width: 103px;
}
.dialog form .default {
  border: 2px solid #0078d7;
}

/* red markers drawn over the dialogs */
.mark {
  position: absolute;
  border: 4px solid #ed1c24;
  pointer-events: none;
}
.m-size { left: 20px; top: 362px; width: 449px; height: 31px; }
.m-font { left: 26px; top: 440px; width: 385px; height: 26px; }
.m-back { left: 24px; top: 465px; width: 385px; height: 26px; }
.m-unit { left: 311px; top: 564px; width: 164px; height: 39px; }
.m-meters { left: 137px; top: 77px; width: 249px; height: 43px; }
.m-round { left: 8px; top: 141px; width: 181px; height: 43px; }
.m-symbol { left: 8px; top: 198px; width: 171px; height: 34px; }
```
